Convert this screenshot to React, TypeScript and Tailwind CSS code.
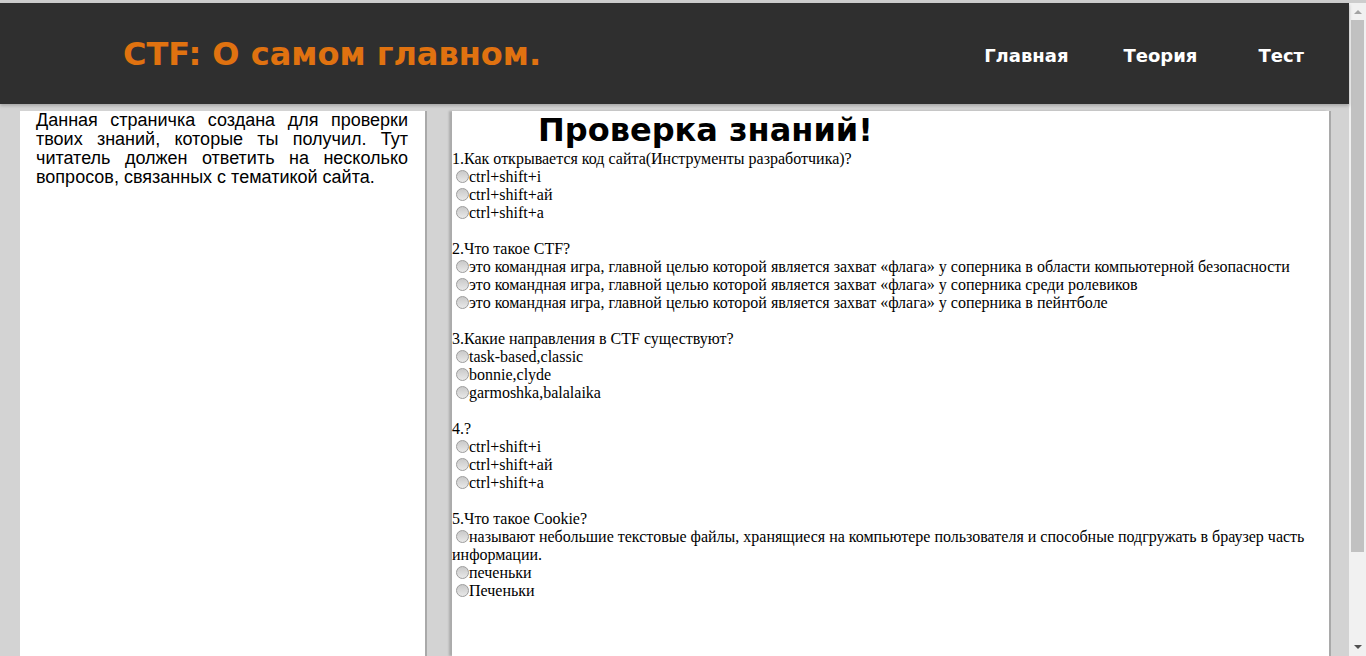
import React from "react";

const questions = [
  {
    q: "1.Как открывается код сайта(Инструменты разработчика)?",
    a: ["ctrl+shift+i", "ctrl+shift+ай", "ctrl+shift+a"],
  },
  {
    q: "2.Что такое CTF?",
    a: [
      "это командная игра, главной целью которой является захват «флага» у соперника в области компьютерной безопасности",
      "это командная игра, главной целью которой является захват «флага» у соперника среди ролевиков",
      "это командная игра, главной целью которой является захват «флага» у соперника в пейнтболе",
    ],
  },
  {
    q: "3.Какие направления в CTF существуют?",
    a: ["task-based,classic", "bonnie,clyde", "garmoshka,balalaika"],
  },
  {
    q: "4.?",
    a: ["ctrl+shift+i", "ctrl+shift+ай", "ctrl+shift+a"],
  },
  {
    q: "5.Что такое Cookie?",
    a: [
      "называют небольшие текстовые файлы, хранящиеся на компьютере пользователя и способные подгружать в браузер часть информации.",
      "печеньки",
      "Печеньки",
    ],
  },
];

function Radio() {
  return (
    <span className="inline-block align-top mt-[2px] ml-[4px] h-[13px] w-[13px] rounded-full border border-[#9c9c9c] bg-[linear-gradient(#c9c9c9,#e8e8e8)]" />
  );
}

export default function App() {
  return (
    <div className="h-[656px] overflow-hidden bg-[#cdcdcd] pt-[3px]">
      <div className="flex h-[653px]">
        {/* page */}
        <div className="flex w-[1349px] flex-col bg-[#d3d3d3]">
          {/* header */}
          <header className="relative z-10 flex h-[101px] shrink-0 items-center justify-between bg-[#2f2f2f] shadow-[0_2px_3px_#a8a8a8]">
            <h1 className="pl-[123px] font-['DejaVu_Sans',sans-serif] text-[32px] font-bold text-[#e07210]">
              CTF: О самом главном.
            </h1>
            <nav className="flex pt-[3px] pr-[45px] font-['DejaVu_Sans',sans-serif] text-[18px] font-bold text-white">
              <a>Главная</a>
              <a className="ml-[55px]">Теория</a>
              <a className="ml-[61px]">Тест</a>
            </nav>
          </header>

          {/* content */}
          <div className="flex flex-1 pt-[7px]">
            <aside className="ml-[20px] w-[405px] bg-white pl-4 pr-[17px] text-justify font-['Liberation_Sans',Arial,sans-serif] text-[18px] leading-[19px] text-black shadow-[2px_0_0_#a9a9a9]">
              Данная страничка создана для проверки твоих знаний, которые ты получил. Тут читатель должен ответить на несколько вопросов, связанных с тематикой сайта.
            </aside>

            <main className="ml-[27px] w-[877px] bg-white font-['Liberation_Serif','Times_New_Roman',serif] text-[16px] leading-[18px] text-black shadow-[-3px_0_2px_#ababab,2px_0_0_#a9a9a9]">
              <h2 className="pl-[86px] font-['DejaVu_Sans',sans-serif] text-[32px] font-bold leading-[39px]">
                Проверка знаний!
              </h2>
              {questions.map((item, i) => (
                <div key={i} className="mb-[18px]">
                  <div>{item.q}</div>
                  {item.a.map((ans, j) => (
                    <div key={j}>
                      <Radio />
                      {ans}
                    </div>
                  ))}
                </div>
              ))}
            </main>
          </div>
        </div>

        {/* scrollbar */}
        <div className="flex w-[17px] flex-col items-center bg-[#f1f1f1]">
          <div className="mt-[7px] h-0 w-0 border-x-[4px] border-b-[4px] border-x-transparent border-b-[#a3a3a3]" />
          <div className="mt-[6px] h-[532px] w-[13px] bg-[#c1c1c1]" />
          <div className="mt-auto mb-[7px] h-0 w-0 border-x-[4px] border-t-[4px] border-x-transparent border-t-[#505050]" />
        </div>
      </div>
    </div>
  );
}
